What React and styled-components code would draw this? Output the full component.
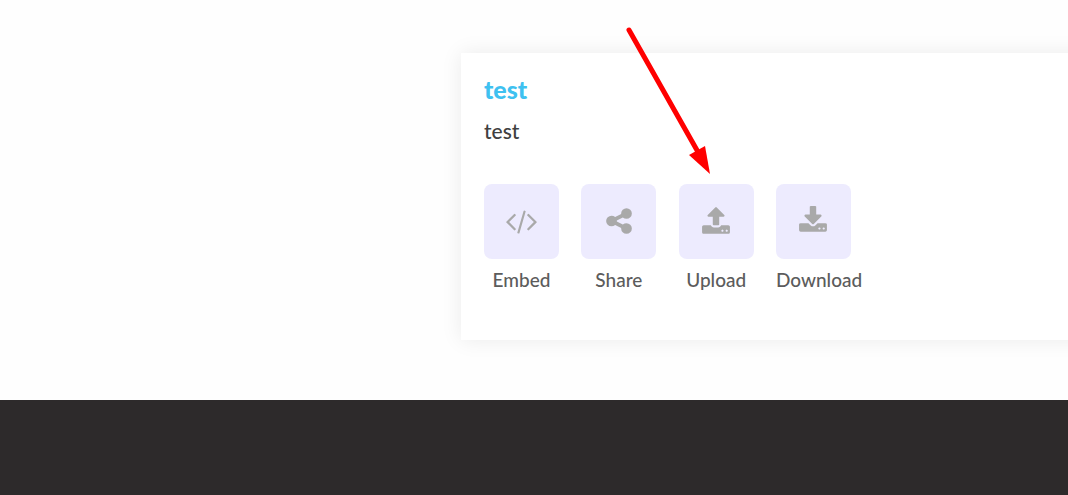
import React from "react";
import styled, { createGlobalStyle } from "styled-components";

const GlobalStyle = createGlobalStyle`
  *, *::before, *::after { box-sizing: border-box; }
  body {
    margin: 0;
    background: #fefefe;
    font-family: Lato, "Open Sans", sans-serif;
  }
`;

const Page = styled.div`
  position: relative;
  display: flex;
  flex-direction: column;
  min-height: 100vh;
  overflow-x: clip;
`;

const Main = styled.main`
  padding: 53px 0 60px 461px;
`;

const Card = styled.article`
  margin-right: -32px;
  padding: 20px 23px 48px;
  background: #fff;
  box-shadow: 0 0 20px rgba(0, 0, 0, 0.08);
`;

const Title = styled.h2`
  margin: 0;
  color: #3fc1f0;
  font-size: 25px;
  font-weight: 900;
  line-height: 32px;
`;

const Description = styled.p`
  margin: 10px 0 38px;
  color: #404040;
  font-size: 21px;
  font-weight: 500;
  line-height: 31px;
`;

const Actions = styled.div`
  display: flex;
  justify-content: space-between;
  max-width: 367px;
`;

const Action = styled.button`
  display: flex;
  flex-direction: column;
  align-items: stretch;
  width: 75px;
  padding: 0;
  border: 0;
  background: none;
  color: #5c5c5c;
  font: 500 19px/24px Lato, "Open Sans", sans-serif;
  cursor: pointer;
`;

const Tile = styled.span`
  display: flex;
  align-items: center;
  justify-content: center;
  height: 75px;
  margin-bottom: 9px;
  padding-bottom: 2px;
  border-radius: 8px;
  background: #edebfe;
  color: #a9a9a9;
`;

const Label = styled.span`
  white-space: nowrap;
`;

const Footer = styled.footer`
  flex: 1;
  min-height: 95px;
  background: #2d2a2b;
`;

const Pointer = styled.svg`
  position: absolute;
  top: 24px;
  left: 620px;
  pointer-events: none;
`;

const ACTIONS = [
  {
    label: "Embed",
    width: 33,
    box: "64 0 1920 1792",
    d: "M681 1399l-50 50q-10 10-23 10t-23-10l-466-466q-10-10-10-23t10-23l466-466q10-10 23-10t23 10l50 50q10 10 10 23t-10 23l-393 393 393 393q10 10 10 23t-10 23zm591-1067l-373 1291q-4 13-15.5 19.5t-23.5 2.5l-62-17q-13-4-19.5-15.5t-2.5-24.5l373-1291q4-13 15.5-19.5t23.5-2.5l62 17q13 4 19.5 15.5t2.5 24.5zm657 651l-466 466q-10 10-23 10t-23-10l-50-50q-10-10-10-23t10-23l393-393-393-393q-10-10-10-23t10-23l50-50q10-10 23-10t23 10l466 466q10 10 10 23t-10 23z",
  },
  {
    label: "Share",
    width: 30,
    box: "0 0 1792 1792",
    d: "M1344 1024q133 0 226.5 93.5t93.5 226.5-93.5 226.5-226.5 93.5-226.5-93.5-93.5-226.5q0-12 2-34l-360-180q-92 86-218 86-133 0-226.5-93.5t-93.5-226.5 93.5-226.5 226.5-93.5q126 0 218 86l360-180q-2-22-2-34 0-133 93.5-226.5t226.5-93.5 226.5 93.5 93.5 226.5-93.5 226.5-226.5 93.5q-126 0-218-86l-360 180q2 22 2 34t-2 34l360 180q92-86 218-86z",
  },
  {
    label: "Upload",
    width: 28,
    box: "64 0 1664 1792",
    d: "M1344 1472q0-26-19-45t-45-19-45 19-19 45 19 45 45 19 45-19 19-45zm256 0q0-26-19-45t-45-19-45 19-19 45 19 45 45 19 45-19 19-45zm128-224v320q0 40-28 68t-68 28h-1472q-40 0-68-28t-28-68v-320q0-40 28-68t68-28h427q21 56 70.5 92t110.5 36h256q61 0 110.5-36t70.5-92h427q40 0 68 28t28 68zm-325-648q-17 40-59 40h-256v448q0 26-19 45t-45 19h-256q-26 0-45-19t-19-45v-448h-256q-42 0-59-40-17-39 14-69l448-448q18-19 45-19t45 19l448 448q31 30 14 69z",
  },
  {
    label: "Download",
    width: 28,
    box: "64 0 1664 1792",
    d: "M1344 1344q0-26-19-45t-45-19-45 19-19 45 19 45 45 19 45-19 19-45zm256 0q0-26-19-45t-45-19-45 19-19 45 19 45 45 19 45-19 19-45zm128-224v320q0 40-28 68t-68 28h-1472q-40 0-68-28t-28-68v-320q0-40 28-68t68-28h465l135 136q58 56 136 56t136-56l136-136h464q40 0 68 28t28 68zm-325-569q17 41-14 70l-448 448q-18 19-45 19t-45-19l-448-448q-31-29-14-70 17-39 59-39h256v-448q0-26 19-45t45-19h256q26 0 45 19t19 45v448h256q42 0 59 39z",
  },
];

export default function App() {
  return (
    <Page>
      <GlobalStyle />
      <Main>
        <Card>
          <Title>test</Title>
          <Description>test</Description>
          <Actions>
            {ACTIONS.map(({ label, width, box, d }) => (
              <Action key={label} type="button">
                <Tile>
                  <svg width={width} height="30" viewBox={box} fill="currentColor" aria-hidden="true">
                    <path d={d} />
                  </svg>
                </Tile>
                <Label>{label}</Label>
              </Action>
            ))}
          </Actions>
        </Card>
      </Main>
      <Footer />
      <Pointer width="100" height="156" viewBox="620 24 100 156" aria-hidden="true">
        <path d="M629 30L698 152" stroke="#f00" strokeWidth="5" strokeLinecap="round" />
        <path d="M689 155L705 146L710 174Z" fill="#f00" />
      </Pointer>
    </Page>
  );
}
